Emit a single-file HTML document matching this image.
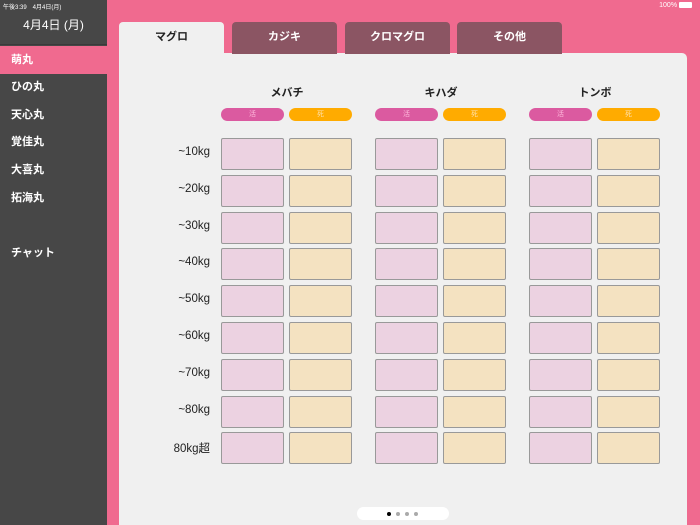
<!DOCTYPE html>
<html><head><meta charset="utf-8"><style>
*{margin:0;padding:0;box-sizing:border-box}
html,body{width:700px;height:525px;overflow:hidden}
body{background:#f06a8f;font-family:"Liberation Sans","Noto Sans CJK JP",sans-serif;position:relative}
.side{position:absolute;left:0;top:0;width:107px;height:525px;background:#474747;color:#fff}
.hdr{position:absolute;left:0;top:0;width:107px;height:45px;background:#474747;border-bottom:1px solid #3a3a3a}
.st{position:absolute;left:3px;top:2px;font-size:6px;color:#fff}
.date{position:absolute;left:0;width:107px;top:16px;text-align:center;font-size:12px}
.item{position:absolute;left:0;width:107px;height:28px;line-height:28px;padding-left:11px;font-size:11px;font-weight:bold}
.sel{background:#f06a8f}
.panel{position:absolute;left:119px;top:53px;width:568px;height:472px;background:#f0f0f0;border-radius:5px 5px 0 0}
.tab{position:absolute;top:22px;width:105px;height:32px;background:#8b5563;border-radius:4px 4px 0 0;color:#fff;font-size:11px;font-weight:bold;text-align:center;line-height:30px}
.tab.a{background:#f0f0f0;color:#222;height:40px}
.h{position:absolute;top:84px;font-size:11px;font-weight:bold;color:#222;text-align:center;width:130px}
.pill{position:absolute;top:108px;width:63px;height:13px;border-radius:7px;font-size:7px;color:#fbd;text-align:center;line-height:13px}
.pk{background:#db5aa0}.or{background:#ffab00;color:#ffe2b0}
.b{position:absolute;width:63px;height:32px;border:1px solid #999;border-radius:2px}
.bp{background:#ecd2e1}.bo{background:#f4e2c1}
.lb{position:absolute;left:150px;width:60px;text-align:right;font-size:11.5px;color:#222}
.dots{position:absolute;left:357px;top:507px;width:92px;height:13px;background:#fff;border-radius:7px}
.d{position:absolute;top:5px;width:4px;height:4px;border-radius:2px;background:#aaa}
</style></head><body>
<div class="side">
<div class="hdr"><div class="st">午後3:39　4月4日(月)</div><div class="date">4月4日 (月)</div></div>
<div class="item sel" style="top:46px">萌丸</div>
<div class="item" style="top:73px">ひの丸</div>
<div class="item" style="top:101px">天心丸</div>
<div class="item" style="top:128px">覚佳丸</div>
<div class="item" style="top:156px">大喜丸</div>
<div class="item" style="top:184px">拓海丸</div>
<div class="item" style="top:239px">チャット</div>
</div>
<div style="position:absolute;right:8px;top:2px;font-size:7px;color:#fff">100% <span style="display:inline-block;width:13px;height:6px;background:#fff;border-radius:1px;vertical-align:middle"></span></div>
<div class="panel"></div>
<div class="tab a" style="left:119px">マグロ</div>
<div class="tab" style="left:232px">カジキ</div>
<div class="tab" style="left:345px">クロマグロ</div>
<div class="tab" style="left:457px">その他</div>
<div id="g"></div>
<div class="dots"><div class="d" style="left:30px;background:#000"></div><div class="d" style="left:39px"></div><div class="d" style="left:48px"></div><div class="d" style="left:57px"></div></div>
<script>
var g='',cols=[221,375,529],names=['メバチ','キハダ','トンボ'],rows=[138,175,212,248,285,322,359,396,432],labs=['~10kg','~20kg','~30kg','~40kg','~50kg','~60kg','~70kg','~80kg','80kg超'];
cols.forEach(function(x,i){g+='<div class="h" style="left:'+(x+1)+'px">'+names[i]+'</div>';
g+='<div class="pill pk" style="left:'+x+'px">活</div><div class="pill or" style="left:'+(x+68)+'px">死</div>';
rows.forEach(function(y){g+='<div class="b bp" style="left:'+x+'px;top:'+y+'px"></div><div class="b bo" style="left:'+(x+68)+'px;top:'+y+'px"></div>';});});
rows.forEach(function(y,i){g+='<div class="lb" style="top:'+(y+8)+'px">'+labs[i]+'</div>';});
document.getElementById('g').innerHTML=g;
</script>
</body></html>
